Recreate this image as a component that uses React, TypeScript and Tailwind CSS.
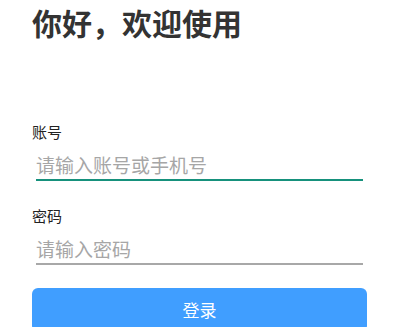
export default function App() {
  const font = { fontFamily: '"Noto Sans CJK SC", "Noto Sans", sans-serif' };

  return (
    <div className="min-h-screen bg-white pl-[32px] pr-[30px] pt-[4px]" style={font}>
      <h1 className="text-[30px] font-bold leading-[36px] text-[#333333]">
        你好，欢迎使用
      </h1>

      <form className="mt-[82px] flex flex-col">
        <label className="text-[15px] leading-[20px] text-[#222222]">账号</label>
        <input
          type="text"
          placeholder="请输入账号或手机号"
          className="mx-[4px] mt-[9px] h-[30px] border-b-2 border-[#16917c] bg-transparent pb-[2px] text-[19px] leading-[26px] text-[#333333] outline-none placeholder:text-[#a6a6a6]"
        />

        <label className="mt-[25px] text-[15px] leading-[20px] text-[#222222]">
          密码
        </label>
        <input
          type="password"
          placeholder="请输入密码"
          className="mx-[4px] mt-[9px] h-[30px] border-b-2 border-[#a8a8a8] bg-transparent pb-[2px] text-[19px] leading-[26px] text-[#333333] outline-none placeholder:text-[#a6a6a6]"
        />

        <button
          type="button"
          className="mt-[23px] h-[44px] rounded-[6px] bg-[#409eff] text-[17px] text-white"
        >
          登录
        </button>
      </form>
    </div>
  );
}
